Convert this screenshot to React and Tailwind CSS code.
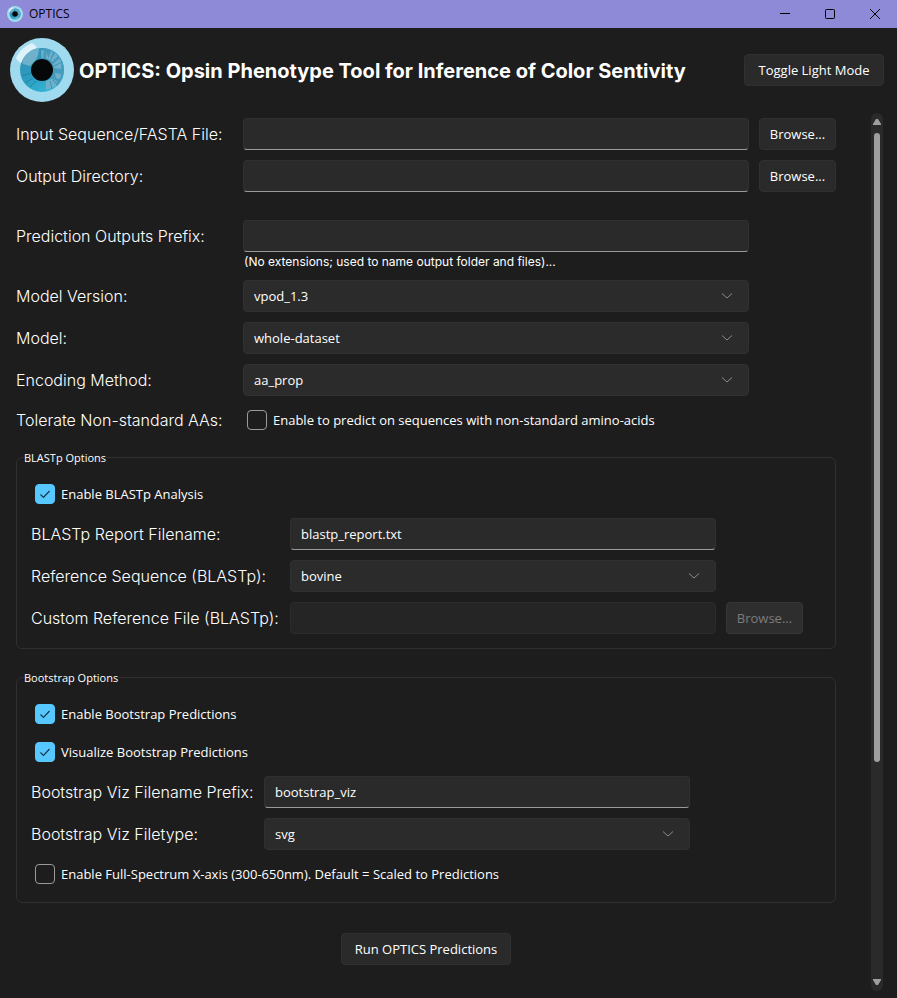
import { useState } from "react";

const UI = "font-['Open_Sans','Noto_Sans',sans-serif]";
const GOTHIC = "font-['Century_Gothic',Inter,sans-serif]";

function Eye({ className }) {
  return (
    <svg viewBox="0 0 64 64" className={className} aria-hidden="true">
      <defs>
        <linearGradient id="iris" x1="0" y1="0.2" x2="0.6" y2="1">
          <stop offset="0" stopColor="#3590b4" />
          <stop offset="0.5" stopColor="#2a9cc0" />
          <stop offset="1" stopColor="#35b4d4" />
        </linearGradient>
      </defs>
      <circle cx="32" cy="32" r="32" fill="#9fdaee" />
      <circle cx="32" cy="32" r="22" fill="url(#iris)" />
      <path d="M32 32 V10 A22 22 0 0 1 47 48 Z" fill="#459bbd" />
      <g fill="#6fb0ca">
        <path d="M31 12 L34 13 L33 20 L31.5 20 Z" />
        <path d="M36 14 L38.500 20 L41 13 L43 14 L40 22 L36 20 Z" />
        <path d="M45 15 L48 18 L42 24 L41 22 Z" />
        <path d="M50 20 L51.500 26 L51 31 L44 30 L43 26 Z" />
        <path d="M36 43 L42 41 L47 43 L46 48 L42 50 L36 52 Z" />
        <path d="M45 35 L51 36 L50 41 L46 40 Z" />
      </g>
      <g stroke="#3f94b6" strokeWidth="1">
        <path d="M44 28 L52 24 M40 43 L42 51 M43 42 L47 47" />
      </g>
      <g stroke="#2384a6" strokeWidth="1">
        <path d="M12 38 L21 35 M15 45 L23 40 M20 49 L26 43" />
      </g>
      <path d="M6 20 C9 13 15 8 22 5 C24 6 26 8 27 10 C20 12 14 17 11 25 C9 24 7 22 6 20 Z" fill="#dff2fc" />
      <path d="M12 24 C15 16 21 11 29 10 C29 14 28 18 26 22 L20 28 L13 26 Z" fill="#6fb1cb" />
      <circle cx="32" cy="32" r="11" fill="#050708" />
    </svg>
  );
}

function Button({ children, className = "", ...rest }) {
  return (
    <button
      type="button"
      className={`h-8 rounded border border-[#303030] bg-[#2a2a2a] text-[13px] leading-5 whitespace-nowrap text-white disabled:border-[#363636] disabled:bg-[#2e2e2e] disabled:text-[#7c7c7c] ${className}`}
      {...rest}
    >
      {children}
    </button>
  );
}

function Label({ htmlFor, children }) {
  return (
    <label htmlFor={htmlFor} className={`${GOTHIC} flex h-8 items-center text-[16px] font-light whitespace-nowrap`}>
      {children}
    </label>
  );
}

function TextField({ id, defaultValue, disabled }) {
  return (
    <input
      id={id}
      type="text"
      defaultValue={defaultValue}
      disabled={disabled}
      className="block h-8 w-full min-w-0 rounded border border-[#303030] border-b-[#9a9a9a] bg-[#2a2a2a] px-2.5 text-[13px] text-white outline-none disabled:border-[#2b2b2b] disabled:bg-[#252525]"
    />
  );
}

function Select({ id, options }) {
  return (
    <div className="relative min-w-0">
      <select
        id={id}
        className="block h-8 w-full appearance-none rounded border border-[#303030] bg-[#2b2b2b] pt-0.5 pr-10 pl-2.5 text-[13px] text-white outline-none"
      >
        {options.map((o) => (
          <option key={o}>{o}</option>
        ))}
      </select>
      <svg viewBox="0 0 12 8" className="pointer-events-none absolute top-3 right-4 h-2 w-3" aria-hidden="true">
        <path d="M1 1.5 L6 6 L11 1.5" fill="none" stroke="#8c8c8c" strokeWidth="1" />
      </svg>
    </div>
  );
}

function Check({ id, checked: initial = false, children }) {
  const [checked, setChecked] = useState(initial);
  return (
    <label htmlFor={id} className="flex h-7 items-center gap-1.5 pl-1 text-[13px] whitespace-nowrap">
      <span className="relative h-5 w-5">
        <input
          id={id}
          type="checkbox"
          checked={checked}
          onChange={(e) => setChecked(e.target.checked)}
          className="block h-5 w-5 appearance-none rounded border border-[#9a9a9a] checked:border-[#57c8ff] checked:bg-[#57c8ff]"
        />
        {checked && (
          <svg viewBox="0 0 20 20" className="pointer-events-none absolute inset-0 h-5 w-5" aria-hidden="true">
            <path d="M5.5 10.5 L8.5 13.5 L14.5 7" fill="none" stroke="#14384a" strokeWidth="1.2" />
          </svg>
        )}
      </span>
      <span className="pt-0.5">{children}</span>
    </label>
  );
}

function Group({ title, className, children }) {
  return (
    <fieldset className={`min-w-0 rounded-md border border-[#303030] pb-3.5 ${className}`}>
      <legend className="ml-[7px] text-[11px] leading-[15px]">{title}</legend>
      <div className="flex flex-col gap-2.5 pt-[15px] pr-8 pl-3.5">{children}</div>
    </fieldset>
  );
}

const MAIN_ROW = "grid grid-cols-[217px_minmax(0,1fr)_77px] gap-x-2.5";
const BLAST_ROW = "grid grid-cols-[249px_minmax(0,1fr)_77px] gap-x-2.5";
const BOOT_ROW = "grid grid-cols-[223px_minmax(0,1fr)] gap-x-2.5 pr-[113px]";

export default function App() {
  return (
    <div className={`${UI} flex min-h-screen flex-col bg-[#1d1d1d] text-white`}>
      <div className="flex h-7 items-center bg-[#8f8ad8] pl-[7px] text-black">
        <Eye className="h-4 w-4" />
        <span className="ml-1.5 flex-1 text-[12px]">OPTICS</span>
        <button type="button" aria-label="Minimize" className="flex h-6 w-[45px] items-center justify-center">
          <svg viewBox="0 0 10 10" className="h-2.5 w-2.5"><path d="M0 4.5H10" stroke="#000" /></svg>
        </button>
        <button type="button" aria-label="Maximize" className="flex h-6 w-[45px] items-center justify-center">
          <svg viewBox="0 0 10 10" className="h-2.5 w-2.5"><rect x="0.5" y="0.5" width="9" height="9" rx="0.8" fill="none" stroke="#000" /></svg>
        </button>
        <button type="button" aria-label="Close" className="flex h-6 w-[45px] items-center justify-center">
          <svg viewBox="0 0 10 10" className="h-2.5 w-2.5"><path d="M0 0L10 10M10 0L0 10" stroke="#000" /></svg>
        </button>
      </div>

      <header className="flex items-center pt-2.5 pr-[13px] pb-[11px] pl-2.5">
        <Eye className="h-16 w-16 shrink-0" />
        <h1 className={`${GOTHIC} ml-[5px] flex-1 pt-0.5 text-[20px] font-bold whitespace-nowrap`}>
          OPTICS: Opsin Phenotype Tool for Inference of Color Sentivity
        </h1>
        <Button className="w-[140px]">Toggle Light Mode</Button>
      </header>

      <div className="flex flex-1 pr-3.5 pb-[7px]">
        <main className="flex min-w-0 flex-1 flex-col gap-2.5 pt-[5px] pr-[35px] pl-4">
          <div className={MAIN_ROW}>
            <Label htmlFor="input">Input Sequence/FASTA File:</Label>
            <TextField id="input" />
            <Button>Browse...</Button>
          </div>
          <div className={MAIN_ROW}>
            <Label htmlFor="outdir">Output Directory:</Label>
            <TextField id="outdir" />
            <Button>Browse...</Button>
          </div>
          <div className={`${MAIN_ROW} mt-[18px]`}>
            <Label htmlFor="prefix">Prediction Outputs Prefix:</Label>
            <div className="-mb-0.5">
              <TextField id="prefix" />
              <p className={`${GOTHIC} pl-px text-[12px] leading-5 whitespace-nowrap`}>
                (No extensions; used to name output folder and files)...
              </p>
            </div>
          </div>
          <div className={MAIN_ROW}>
            <Label htmlFor="version">Model Version:</Label>
            <Select id="version" options={["vpod_1.3"]} />
          </div>
          <div className={MAIN_ROW}>
            <Label htmlFor="model">Model:</Label>
            <Select id="model" options={["whole-dataset"]} />
          </div>
          <div className={MAIN_ROW}>
            <Label htmlFor="encoding">Encoding Method:</Label>
            <Select id="encoding" options={["aa_prop"]} />
          </div>
          <div className={`${MAIN_ROW} h-7 content-center items-center`}>
            <Label htmlFor="tolerate">Tolerate Non-standard AAs:</Label>
            <Check id="tolerate">Enable to predict on sequences with non-standard amino-acids</Check>
          </div>

          <Group title="BLASTp Options" className="mt-1.5">
            <Check id="blastp" checked>Enable BLASTp Analysis</Check>
            <div className={BLAST_ROW}>
              <Label htmlFor="report">BLASTp Report Filename:</Label>
              <TextField id="report" defaultValue="blastp_report.txt" />
            </div>
            <div className={BLAST_ROW}>
              <Label htmlFor="reference">Reference Sequence (BLASTp):</Label>
              <Select id="reference" options={["bovine"]} />
            </div>
            <div className={BLAST_ROW}>
              <Label htmlFor="custom">Custom Reference File (BLASTp):</Label>
              <TextField id="custom" disabled />
              <Button disabled>Browse...</Button>
            </div>
          </Group>

          <Group title="Bootstrap Options" className="mt-[11px]">
            <Check id="bootstrap" checked>Enable Bootstrap Predictions</Check>
            <Check id="visualize" checked>Visualize Bootstrap Predictions</Check>
            <div className={BOOT_ROW}>
              <Label htmlFor="viz">Bootstrap Viz Filename Prefix:</Label>
              <TextField id="viz" defaultValue="bootstrap_viz" />
            </div>
            <div className={BOOT_ROW}>
              <Label htmlFor="filetype">Bootstrap Viz Filetype:</Label>
              <Select id="filetype" options={["svg"]} />
            </div>
            <Check id="spectrum">Enable Full-Spectrum X-axis (300-650nm). Default = Scaled to Predictions</Check>
          </Group>

          <Button className="mt-5 w-[170px] self-center">Run OPTICS Predictions</Button>
        </main>

        <div className="flex w-3 flex-col items-center rounded-full bg-[#2a2a2a] py-1.5" aria-hidden="true">
          <svg viewBox="0 0 8 6" className="h-1.5 w-2 shrink-0"><path d="M3 0H5L8 5V6H0V5Z" fill="#9f9f9f" /></svg>
          <div className="my-2 flex w-1.5 flex-1 flex-col">
            <div className="h-[75%] w-1.5 rounded-full bg-[#9f9f9f]" />
          </div>
          <svg viewBox="0 0 8 6" className="h-1.5 w-2 shrink-0"><path d="M0 0H8V1L5 6H3L0 1Z" fill="#9f9f9f" /></svg>
        </div>
      </div>
    </div>
  );
}
